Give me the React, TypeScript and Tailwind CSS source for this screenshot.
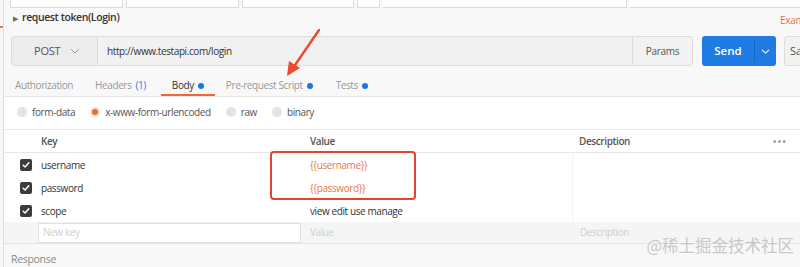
import React from 'react';

const Dot = () => <span className="ml-[4px] inline-block h-[6px] w-[6px] rounded-full bg-[#1f74db]" />;

const Check = () => (
  <span className="flex h-[12px] w-[12px] items-center justify-center rounded-[2px] bg-[#3c3c3c]">
    <svg width="8" height="8" viewBox="0 0 8 8" fill="none">
      <path d="M1.2 4.2 3.1 6 6.8 1.8" stroke="white" strokeWidth="1.5" strokeLinecap="round" strokeLinejoin="round" />
    </svg>
  </span>
);

const Radio = ({ label, on }: { label: string; on?: boolean }) => (
  <div className="flex items-center gap-[5px]">
    {on ? (
      <span className="flex h-[10px] w-[10px] items-center justify-center rounded-full bg-[#f8e0d6]">
        <span className="h-[6px] w-[6px] rounded-full bg-[#ee6a38]" />
      </span>
    ) : (
      <span className="h-[10px] w-[10px] rounded-full bg-[#e4e4e4]" />
    )}
    <span className="text-[10px] tracking-[-0.4px] text-[#555]">{label}</span>
  </div>
);

const rows = [
  { key: 'username', value: '{{username}}', hl: true },
  { key: 'password', value: '{{password}}', hl: true },
  { key: 'scope', value: 'view edit use manage', hl: false },
];

export default function App() {
  return (
    <div className="relative flex h-[267px] w-[800px] overflow-hidden bg-[#f8f8f8] font-['Open_Sans',sans-serif]">
      {/* sidebar edge */}
      <div className="flex w-[3px] shrink-0 flex-col">
        <div className="mt-[26px] h-[2px] w-[3px] bg-[#e8774a]" />
      </div>

      <div className="flex min-w-0 flex-1 flex-col overflow-hidden border-l border-[#dedede]">
        {/* cut off tabs */}
        <div className="flex h-[8px] shrink-0 gap-[3px] pl-[6px]">
          <div className="w-[113px] border-x border-b border-[#dcdcdc] bg-white" />
          <div className="w-[113px] border-x border-b border-[#dcdcdc] bg-white" />
          <div className="w-[112px] border-x border-b border-[#dcdcdc] bg-white" />
          <div className="w-[23px] border-x border-b border-[#dcdcdc] bg-white" />
          <div className="w-[244px] border-r border-b border-[#dcdcdc] bg-white" />
          <div className="flex-1 border-b border-[#dcdcdc] bg-white" />
        </div>

        {/* title */}
        <div className="flex h-[20px] shrink-0 items-center pl-[9px]">
          <span className="text-[7px] leading-none text-[#666]">▶</span>
          <span className="ml-[4px] text-[10.5px] font-semibold tracking-[-0.4px] text-[#333]">request token(Login)</span>
          <div className="ml-auto w-[20px] overflow-hidden">
            <span className="whitespace-nowrap text-[10px] tracking-[-0.3px] text-[#e0714e]">Examples</span>
          </div>
        </div>

        {/* url bar */}
        <div className="mt-[8px] flex h-[30px] shrink-0 pl-[7px]">
          <div className="flex w-[87px] shrink-0 items-center rounded-l-[3px] border border-[#dcdcdc] bg-[#ececec] pl-[22px]">
            <span className="text-[11px] tracking-[-0.2px] text-[#555]">POST</span>
            <svg className="ml-[10px]" width="10" height="6" viewBox="0 0 10 6" fill="none">
              <path d="M1 1l4 4 4-4" stroke="#999" strokeWidth="1" />
            </svg>
          </div>
          <div className="flex w-[534px] shrink-0 items-center border-y border-[#dcdcdc] bg-[#f1f1f1] pl-[9px] text-[10px] tracking-[-0.4px] text-[#333]">
            http://www.testapi.com/login
          </div>
          <div className="flex w-[61px] shrink-0 items-center justify-center rounded-r-[3px] border border-[#dcdcdc] bg-[#f2f2f2] text-[10px] tracking-[-0.3px] text-[#555]">
            Params
          </div>
          <div className="ml-[9px] flex w-[74px] shrink-0 rounded-[3px] bg-[#1f7ce4] text-white">
            <div className="flex w-[52px] items-center justify-center text-[11.5px] font-semibold">Send</div>
            <div className="my-[4px] w-px bg-[#1767c0]" />
            <div className="flex flex-1 items-center justify-center">
              <svg width="9" height="5" viewBox="0 0 9 5" fill="none">
                <path d="M1 0.8l3.5 3.3 3.5-3.3" stroke="white" strokeWidth="1.1" />
              </svg>
            </div>
          </div>
          <div className="ml-[8px] flex w-[40px] shrink-0 items-center rounded-l-[3px] border border-[#dcdcdc] bg-[#f2f2f2] pl-[5px] text-[11px] text-[#555]">
            Save
          </div>
        </div>

        {/* tabs */}
        <div className="flex h-[31px] shrink-0 items-end border-b border-[#e6e6e6] pl-[11px] text-[10px] tracking-[-0.4px]">
          <div className="flex h-[30px] items-end pb-[3px] text-[#999]">Authorization</div>
          <div className="ml-[22px] flex h-[30px] items-end pb-[3px] text-[#999]">
            Headers <span className="ml-[4px] text-[#2f7bdb]">(1)</span>
          </div>
          <div className="ml-[15px] flex h-[30px] items-end border-b-2 border-[#f0683a] px-[11px] pb-[1px] text-[#333]">
            <span className="flex items-center">
              Body
              <Dot />
            </span>
          </div>
          <div className="ml-[11px] flex h-[30px] items-end pb-[3px] text-[#999]">
            <span className="flex items-center">
              Pre-request Script
              <Dot />
            </span>
          </div>
          <div className="ml-[23px] flex h-[30px] items-end pb-[3px] text-[#999]">
            <span className="flex items-center">
              Tests
              <Dot />
            </span>
          </div>
        </div>

        {/* body type */}
        <div className="flex h-[33px] shrink-0 items-center gap-[15px] border-b border-[#e8e8e8] bg-white pb-[2px] pl-[13px]">
          <Radio label="form-data" />
          <Radio label="x-www-form-urlencoded" on />
          <Radio label="raw" />
          <Radio label="binary" />
        </div>

        {/* table */}
        <div className="flex h-[23px] shrink-0 items-center border-b border-[#e6e6e6] bg-white pt-[1px] text-[10px] font-semibold tracking-[-0.4px] text-[#555]">
          <div className="w-[29px] shrink-0" />
          <div className="w-[269px] shrink-0 pl-[8px]">Key</div>
          <div className="w-[270px] shrink-0 pl-[8px]">Value</div>
          <div className="flex flex-1 items-center pl-[7px]">
            Description
            <span className="ml-auto mr-[13px] text-[10px] tracking-[1px] text-[#999]">•••</span>
          </div>
        </div>
        {rows.map((r) => (
          <div key={r.key} className="flex h-[23px] shrink-0 items-center bg-white pt-[1px] text-[10px] tracking-[-0.4px]">
            <div className="flex w-[29px] shrink-0 justify-end pr-[1px]">
              <Check />
            </div>
            <div className="w-[269px] shrink-0 pl-[8px] text-[#333]">{r.key}</div>
            <div className={`w-[270px] shrink-0 pl-[8px] ${r.hl ? 'text-[#e8784c]' : 'text-[#333]'}`}>{r.value}</div>
            <div className="h-full flex-1 border-l border-[#f0f0f0]" />
          </div>
        ))}
        <div className="flex h-[22px] shrink-0 items-center border-b border-[#e4e4e4] bg-[#f5f5f5] text-[10px] tracking-[-0.4px] text-[#cfcfcf]">
          <div className="w-[29px] shrink-0" />
          <div className="w-[269px] shrink-0 pl-[5px]">
            <div className="flex h-[20px] w-[263px] items-center border border-[#e0e0e0] bg-white pl-[4px]">New key</div>
          </div>
          <div className="w-[270px] shrink-0 pl-[8px]">Value</div>
          <div className="flex-1 pl-[8px]">Description</div>
        </div>

        <div className="flex h-[23px] shrink-0 items-center pl-[7px] pt-[8px] text-[10.5px] tracking-[-0.3px] text-[#888]">Response</div>
      </div>

      {/* annotation: highlight box */}
      <div className="absolute left-[270px] top-[151px] h-[49px] w-[146px] rounded-[4px] border-2 border-[#e4432d]" />

      {/* annotation: arrow */}
      <svg className="absolute left-[280px] top-[26px]" width="46" height="56" viewBox="0 0 46 56" fill="none">
        <path d="M39 4 L13 42" stroke="#ec4a2c" strokeWidth="2.4" strokeLinecap="round" />
        <path d="M7 50 L9 35 L20 42 Z" fill="#ec4a2c" />
      </svg>

      {/* watermark */}
      <div className="absolute right-[6px] top-[233px] font-['Noto_Sans_CJK_SC',sans-serif] text-[16.5px] text-[#c8c8c8]">
        @稀土掘金技术社区
      </div>
    </div>
  );
}
